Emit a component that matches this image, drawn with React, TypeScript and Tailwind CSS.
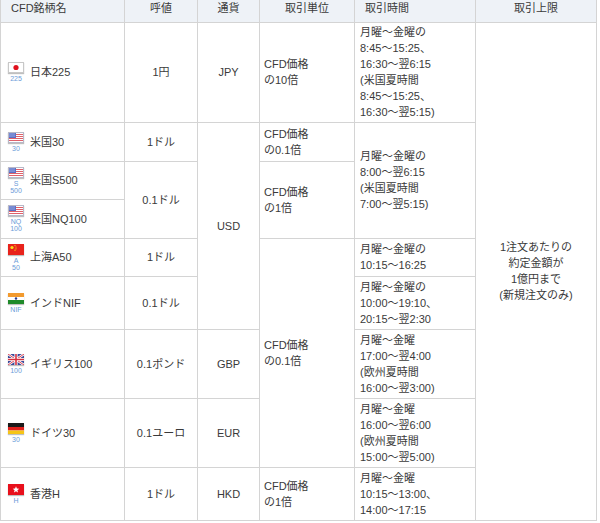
import React from "react"

type Flag = "jp" | "us" | "cn" | "in" | "uk" | "de" | "hk"

function FlagSvg({ kind }: { kind: Flag }) {
    if (kind === "jp") {
        return (
            <svg width="16" height="11" viewBox="0 0 16 11">
                <rect x="0.5" y="0.5" width="15" height="10" fill="#fff" stroke="#c8c8c8" />
                <circle cx="8" cy="5.5" r="2.6" fill="#e0101c" />
            </svg>
        )
    }
    if (kind === "us") {
        return (
            <svg width="16" height="11" viewBox="0 0 16 11">
                <rect x="0" y="0" width="16" height="11" fill="#fff" />
                {[0, 2, 4, 6, 8, 10].map((y) => (
                    <rect key={y} x="0" y={y} width="16" height="1" fill="#e0606a" />
                ))}
                <rect x="0" y="0" width="8" height="6" fill="#5a6fc4" />
                <rect x="1" y="1" width="6" height="4" fill="#8c9ee0" opacity="0.6" />
                <rect x="0.5" y="0.5" width="15" height="10" fill="none" stroke="#b8b8c8" />
            </svg>
        )
    }
    if (kind === "cn") {
        return (
            <svg width="16" height="11" viewBox="0 0 16 11">
                <rect x="0" y="0" width="16" height="11" fill="#e8231c" />
                <circle cx="4" cy="3.5" r="1.6" fill="#f7e11a" />
                <circle cx="7" cy="1.6" r="0.6" fill="#f7e11a" />
                <circle cx="8" cy="3" r="0.6" fill="#f7e11a" />
                <circle cx="8" cy="4.8" r="0.6" fill="#f7e11a" />
                <circle cx="7" cy="6.2" r="0.6" fill="#f7e11a" />
            </svg>
        )
    }
    if (kind === "in") {
        return (
            <svg width="16" height="11" viewBox="0 0 16 11">
                <rect x="0" y="0" width="16" height="4" fill="#f29a2e" />
                <rect x="0" y="4" width="16" height="3" fill="#fff" />
                <rect x="0" y="7" width="16" height="4" fill="#1f8a2a" />
                <circle cx="8" cy="5.5" r="1.2" fill="#2a3b8f" />
            </svg>
        )
    }
    if (kind === "uk") {
        return (
            <svg width="16" height="11" viewBox="0 0 16 11">
                <rect x="0" y="0" width="16" height="11" fill="#3c4a9a" />
                <path d="M0 0 L16 11 M16 0 L0 11" stroke="#fff" strokeWidth="2.4" />
                <path d="M0 0 L16 11 M16 0 L0 11" stroke="#d63040" strokeWidth="0.9" />
                <path d="M8 0 V11 M0 5.5 H16" stroke="#fff" strokeWidth="3.2" />
                <path d="M8 0 V11 M0 5.5 H16" stroke="#d63040" strokeWidth="1.6" />
            </svg>
        )
    }
    if (kind === "de") {
        return (
            <svg width="16" height="11" viewBox="0 0 16 11">
                <rect x="0" y="0" width="16" height="4" fill="#1a1a1a" />
                <rect x="0" y="4" width="16" height="3.5" fill="#e0201c" />
                <rect x="0" y="7.5" width="16" height="3.5" fill="#f5c518" />
            </svg>
        )
    }
    return (
        <svg width="16" height="11" viewBox="0 0 16 11">
            <rect x="0" y="0" width="16" height="11" fill="#e8101c" />
            <path d="M8 2.2 L8.9 4.6 L11.3 4.7 L9.4 6.2 L10.1 8.6 L8 7.2 L5.9 8.6 L6.6 6.2 L4.7 4.7 L7.1 4.6 Z" fill="#fff" />
        </svg>
    )
}

function Icon({ kind, label }: { kind: Flag; label: string[] }) {
    return (
        <div className="flex w-4 shrink-0 flex-col items-center">
            <div className="shadow-[0_1px_1px_rgba(0,0,0,0.25)]">
                <FlagSvg kind={kind} />
            </div>
            <div className="mt-[2px] flex flex-col items-center text-[7px] leading-[7px] text-[#6b9bd8]">
                {label.map((l) => (
                    <span key={l}>{l}</span>
                ))}
            </div>
        </div>
    )
}

function Name({ kind, label, name }: { kind: Flag; label: string[]; name: string }) {
    return (
        <td className="border border-[#d4d4d4] pl-[7px] align-middle">
            <div className="flex items-center gap-[6px]">
                <Icon kind={kind} label={label} />
                <span>{name}</span>
            </div>
        </td>
    )
}

const td = "border border-[#d4d4d4] align-middle"

export default function App() {
    return (
        <div className="bg-white font-['Liberation_Sans','Noto_Sans_CJK_JP',sans-serif] text-[11px] leading-[16px] text-[#3a3a3a]">
            <table className="w-[596px] table-fixed border-collapse">
                <colgroup>
                    <col className="w-[124px]" />
                    <col className="w-[73px]" />
                    <col className="w-[62px]" />
                    <col className="w-[95px]" />
                    <col className="w-[121px]" />
                    <col className="w-[121px]" />
                </colgroup>
                <thead>
                    <tr className="h-[22px] bg-[#eef2f7]">
                        <th className="border border-t-0 border-[#d4d4d4] pl-[10px] text-left align-top font-normal">CFD銘柄名</th>
                        <th className="border border-t-0 border-[#d4d4d4] text-center align-top font-normal">呼値</th>
                        <th className="border border-t-0 border-[#d4d4d4] text-center align-top font-normal">通貨</th>
                        <th className="border border-t-0 border-[#d4d4d4] text-center align-top font-normal">取引単位</th>
                        <th className="border border-t-0 border-[#d4d4d4] pl-[10px] text-left align-top font-normal">取引時間</th>
                        <th className="border border-t-0 border-[#d4d4d4] text-center align-top font-normal">取引上限</th>
                    </tr>
                </thead>
                <tbody>
                    <tr className="h-[100px]">
                        <Name kind="jp" label={["225"]} name="日本225" />
                        <td className={`${td} text-center`}>1円</td>
                        <td className={`${td} text-center`}>JPY</td>
                        <td className={`${td} pl-[4px]`}>CFD価格<br />の10倍</td>
                        <td className={`${td} pl-[5px]`}>
                            月曜～金曜の<br />8:45～15:25、<br />16:30～翌6:15<br />(米国夏時間<br />8:45～15:25、<br />16:30～翌5:15)
                        </td>
                        <td rowSpan={9} className={`${td} text-center`}>
                            1注文あたりの<br />約定金額が<br />1億円まで<br />(新規注文のみ)
                        </td>
                    </tr>
                    <tr className="h-[39px]">
                        <Name kind="us" label={["30"]} name="米国30" />
                        <td className={`${td} text-center`}>1ドル</td>
                        <td rowSpan={5} className={`${td} text-center`}>USD</td>
                        <td className={`${td} pl-[4px]`}>CFD価格<br />の0.1倍</td>
                        <td rowSpan={3} className={`${td} pl-[5px]`}>
                            月曜～金曜の<br />8:00～翌6:15<br />(米国夏時間<br />7:00～翌5:15)
                        </td>
                    </tr>
                    <tr className="h-[38px]">
                        <Name kind="us" label={["S", "500"]} name="米国S500" />
                        <td rowSpan={2} className={`${td} text-center`}>0.1ドル</td>
                        <td rowSpan={2} className={`${td} pl-[4px]`}>CFD価格<br />の1倍</td>
                    </tr>
                    <tr className="h-[39px]">
                        <Name kind="us" label={["NQ", "100"]} name="米国NQ100" />
                    </tr>
                    <tr className="h-[38px]">
                        <Name kind="cn" label={["A", "50"]} name="上海A50" />
                        <td className={`${td} text-center`}>1ドル</td>
                        <td rowSpan={4} className={`${td} pl-[4px]`}>CFD価格<br />の0.1倍</td>
                        <td className={`${td} pl-[5px]`}>月曜～金曜の<br />10:15～16:25</td>
                    </tr>
                    <tr className="h-[53px]">
                        <Name kind="in" label={["NIF"]} name="インドNIF" />
                        <td className={`${td} text-center`}>0.1ドル</td>
                        <td className={`${td} pl-[5px]`}>月曜～金曜の<br />10:00～19:10、<br />20:15～翌2:30</td>
                    </tr>
                    <tr className="h-[69px]">
                        <Name kind="uk" label={["100"]} name="イギリス100" />
                        <td className={`${td} text-center`}>0.1ポンド</td>
                        <td className={`${td} text-center`}>GBP</td>
                        <td className={`${td} pl-[5px]`}>
                            月曜～金曜<br />17:00～翌4:00<br />(欧州夏時間<br />16:00～翌3:00)
                        </td>
                    </tr>
                    <tr className="h-[69px]">
                        <Name kind="de" label={["30"]} name="ドイツ30" />
                        <td className={`${td} text-center`}>0.1ユーロ</td>
                        <td className={`${td} text-center`}>EUR</td>
                        <td className={`${td} pl-[5px]`}>
                            月曜～金曜<br />16:00～翌6:00<br />(欧州夏時間<br />15:00～翌5:00)
                        </td>
                    </tr>
                    <tr className="h-[53px]">
                        <Name kind="hk" label={["H"]} name="香港H" />
                        <td className={`${td} text-center`}>1ドル</td>
                        <td className={`${td} text-center`}>HKD</td>
                        <td className={`${td} pl-[4px]`}>CFD価格<br />の1倍</td>
                        <td className={`${td} pl-[5px]`}>月曜～金曜<br />10:15～13:00、<br />14:00～17:15</td>
                    </tr>
                </tbody>
            </table>
        </div>
    )
}
